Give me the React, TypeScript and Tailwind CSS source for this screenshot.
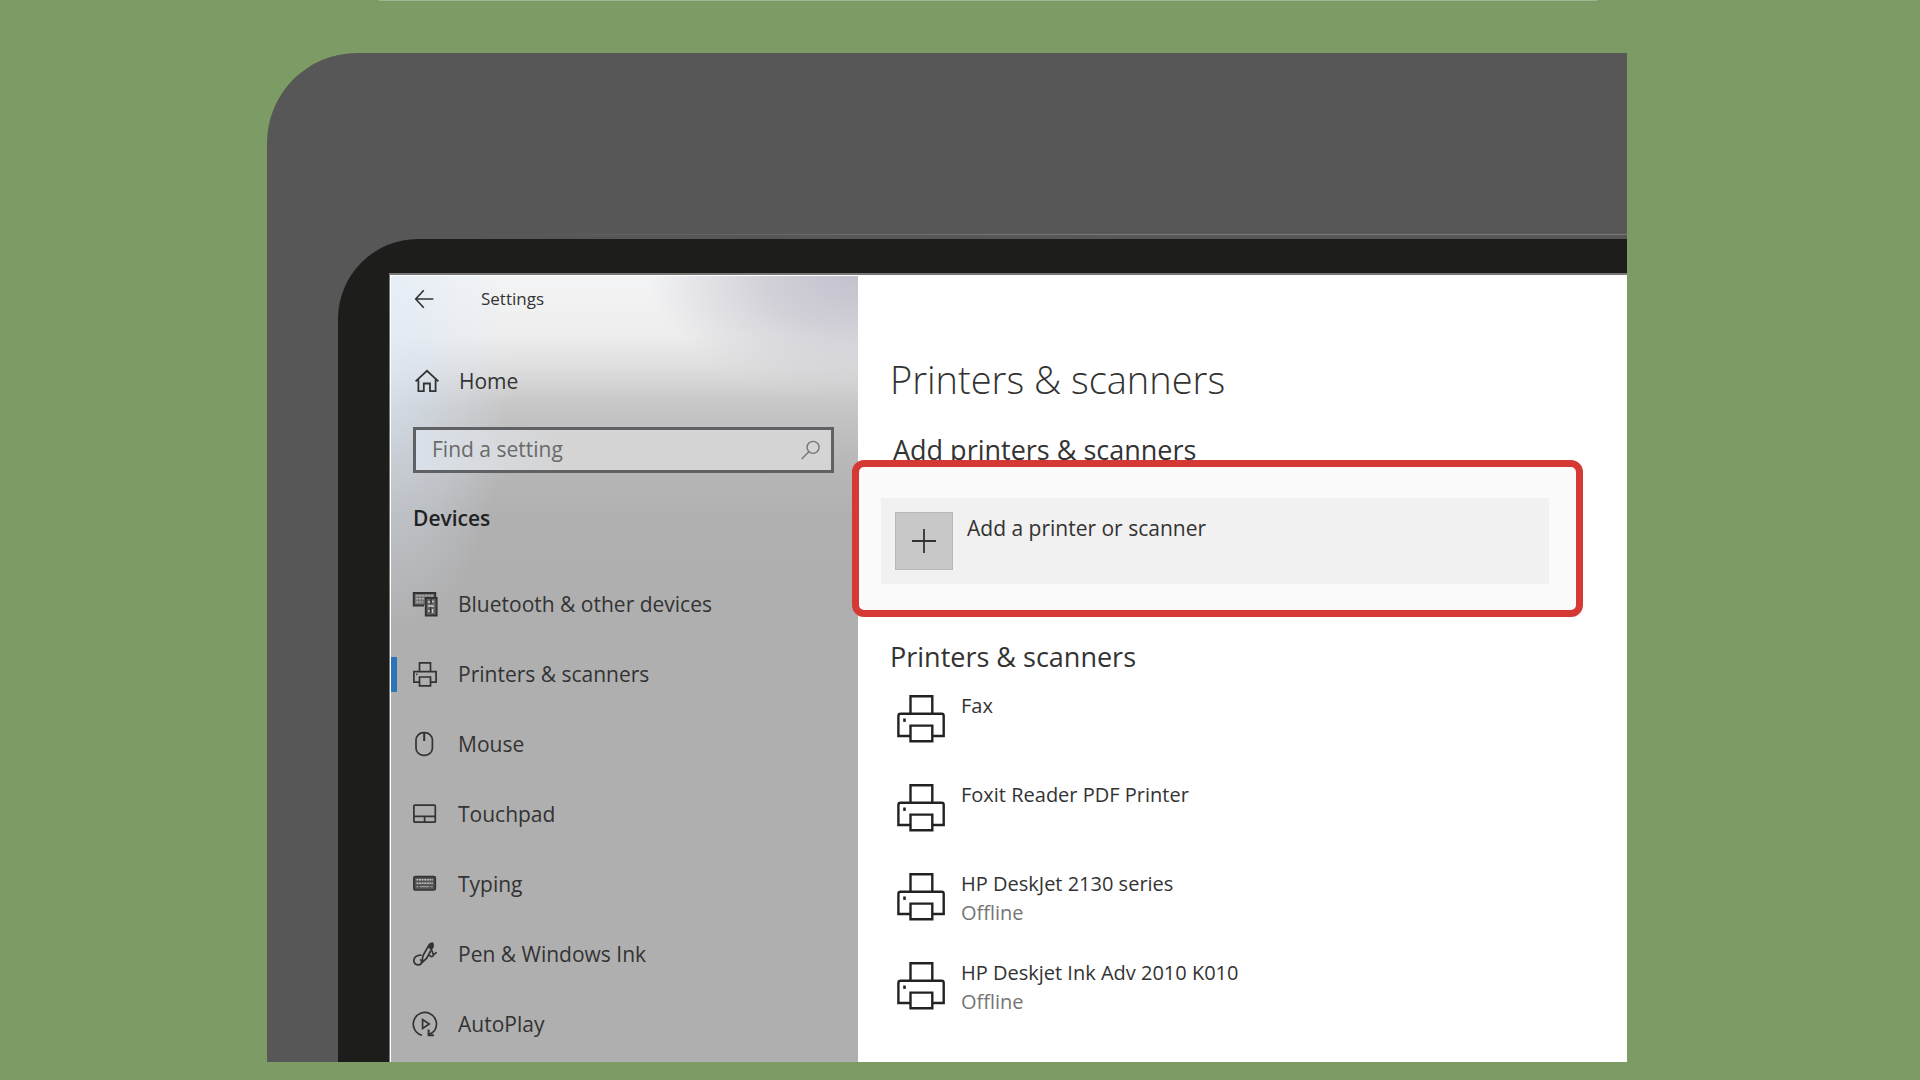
import type { ReactNode } from "react";

interface NavItem {
    label: string;
    icon: ReactNode;
    active?: boolean;
}

interface Printer {
    name: string;
    status?: string;
}

function Icon({ children, className = "w-6 h-6" }: { children: ReactNode; className?: string }) {
    return (
        <svg
            viewBox="0 0 24 24"
            className={`shrink-0 overflow-visible ${className}`}
            fill="none"
            stroke="currentColor"
            strokeWidth={1.7}
            aria-hidden="true"
        >
            {children}
        </svg>
    );
}

const navItems: NavItem[] = [
    {
        label: "Bluetooth & other devices",
        icon: (
            <Icon>
                <path d="M11 13.4H.8V.9h21.4V5" fill="#777" strokeWidth={2} />
                <path d="M3 3.8h17M3 6.8h8M3 10h7" stroke="#aaa" strokeWidth={1.4} strokeDasharray="2.2 .8" />
                <path d="M12.8 6h10.8v17.4H12.8z" fill="#666" strokeWidth={2} />
                <path d="M15 10h2M19 9.5h2M15 14h6M15 19h2M19.5 17v4" stroke="#ccc" strokeWidth={1.6} />
                <path d="M18 7v5M17.6 15v6" strokeWidth={1.4} />
            </Icon>
        ),
    },
    {
        label: "Printers & scanners",
        active: true,
        icon: (
            <Icon>
                <path d="M6.5 9.5V.9h11v8.6" />
                <path d="M6 20.2H.9V9.6h22.2v10.6H18" />
                <path d="M6.5 15h11v8.8h-11z" />
                <path d="M3 12.3h1.6" strokeWidth={1.2} />
            </Icon>
        ),
    },
    {
        label: "Mouse",
        icon: (
            <Icon>
                <rect x="3" y=".6" width="16.4" height="22.8" rx="7.5" />
                <path d="M11.2 1v8" strokeWidth={2} />
            </Icon>
        ),
    },
    {
        label: "Touchpad",
        icon: (
            <Icon>
                <rect x=".9" y="3.2" width="21.4" height="17" rx="1" />
                <path d="M1 14.4h21.2M11.6 14.4V20" />
            </Icon>
        ),
    },
    {
        label: "Typing",
        icon: (
            <Icon>
                <rect x=".9" y="4.6" width="21.4" height="13.4" rx="1.5" fill="#555" />
                <path d="M3.4 7.8h16.4M3.4 11.2h16.4" stroke="#bbb" strokeWidth={1.5} strokeDasharray="2 .6" />
                <path d="M3.4 14.6h2M7 14.6h9M17.6 14.6h2" stroke="#999" strokeWidth={1.3} />
            </Icon>
        ),
    },
    {
        label: "Pen & Windows Ink",
        icon: (
            <Icon>
                <path d="M9 20.5 10 13.5 16.2 2.8c1.4-2 4.6-.2 3.6 2L13.6 16.4z" />
                <path d="M14.6 5.5 18.4 7.8 20.8 3 20.4.2 17.4.8z" fill="currentColor" stroke="none" />
                <path d="M8.5 13.2C3.4 13 .8 15.6.8 18.6c0 3 2.6 4.8 5.4 4.2 2.6-.6 3.4-3.6 1-5.4" />
                <path d="M18.4 8.6c2.2.8.4 3.4 2 3.8 1.4.2 2.2-.8 3-2.2M16.4 12.8c.8 2.2 2.8 2.4 4.4.4" />
            </Icon>
        ),
    },
    {
        label: "AutoPlay",
        icon: (
            <Icon>
                <path d="M9 23.3A11.6 11.6 0 1 1 21.6 18.4c-1.4 1.8-3.4 3.2-5.4 4" />
                <path d="M15.6 17.6v5.6h5.2" strokeWidth={2} />
                <path d="M9.6 7.6v8.8l6.6-4.4z" />
            </Icon>
        ),
    },
];

const printers: Printer[] = [
    { name: "Fax" },
    { name: "Foxit Reader PDF Printer" },
    { name: "HP DeskJet 2130 series", status: "Offline" },
    { name: "HP Deskjet Ink Adv 2010 K010", status: "Offline" },
];

function PrinterIcon() {
    return (
        <svg
            viewBox="0 0 48 48"
            className="h-12 w-12 shrink-0"
            fill="none"
            stroke="#222"
            strokeWidth={2.4}
            aria-hidden="true"
        >
            <path d="M13.5 18.5V1.3h21.8v17.2" />
            <path d="M13.5 41H1.4V21c0-1.4.8-2.2 2.2-2.2h41.2c1.2 0 1.9.8 1.9 2.2v20H35.3" />
            <path d="M13.5 30.6h21.8v15.6H13.5z" />
            <path d="M7.5 23.5v3.4" strokeWidth={2.6} />
        </svg>
    );
}

function Sidebar() {
    return (
        <aside className="flex w-[468px] shrink-0 flex-col border-l border-t border-white bg-[radial-gradient(ellipse_210px_120px_at_100%_0%,#c2c1cd_0%,#c6c5cfbb_45%,transparent_100%),radial-gradient(ellipse_120px_260px_at_0%_12%,#dce8f8aa_0%,transparent_100%),linear-gradient(to_bottom,#f3f4f5_0px,#eeeeee_60px,#dcdcdc_95px,#c6c6c6_130px,#b9b9b9_180px,#b0b0b1_240px,#afafaf_320px)] text-[#333]">
            <header className="flex h-[46px] items-center pl-6">
                <button type="button" aria-label="Back" className="mr-[46px]">
                    <Icon className="h-5 w-5">
                        <path d="M10.5 1.5.9 12l9.6 10.5M1 12h21" strokeWidth={2} />
                    </Icon>
                </button>
                <span className="text-[17px]">Settings</span>
            </header>

            <a href="#home" className="mt-[39px] flex h-10 items-center gap-5 pl-6 text-[21px] leading-7">
                <Icon>
                    <path d="M.6 12.4 12 1.8l11.4 10.6M3.4 10.5v11.6h5.4v-7.6h6.2v7.6h5.6V10.5" strokeWidth={1.8} />
                </Icon>
                Home
            </a>

            <label className="mt-[26px] mr-6 ml-[22px] flex h-[46px] items-center border-3 border-[#5f6164] bg-[linear-gradient(to_right,#dae0e8,#d4d4d4_35%)] pr-2.5 pl-4">
                <input
                    type="text"
                    aria-label="Find a setting"
                    placeholder="Find a setting"
                    className="min-w-0 flex-1 bg-transparent text-[21px] outline-none placeholder:text-[#6a6a6a]"
                />
                <Icon className="h-5 w-5 text-[#777]">
                    <circle cx="14.5" cy="8.8" r="7.2" />
                    <path d="M9.4 14 .8 22.8" />
                </Icon>
            </label>

            <h2 className="mt-[31px] pl-[22px] text-[21px] leading-7 font-semibold text-[#222]">Devices</h2>

            <nav className="mt-[37px]">
                {navItems.map((item) => (
                    <a
                        key={item.label}
                        href={`#${item.label}`}
                        className="flex h-[70px] items-center text-[21px] leading-7"
                    >
                        <span className={item.active ? "h-[35px] w-1.5 bg-[#2b74b8]" : "w-1.5"} />
                        <span className="flex items-center gap-[21px] pl-4">
                            {item.icon}
                            {item.label}
                        </span>
                    </a>
                ))}
            </nav>
        </aside>
    );
}

function Content() {
    return (
        <main className="flex min-w-0 flex-1 flex-col bg-white text-[#333]">
            <h1 className="mt-[78px] pl-8 text-[38px] leading-[52px] font-light">Printers &amp; scanners</h1>
            <h2 className="mt-[27px] pl-[35px] text-[27px] leading-9">Add printers &amp; scanners</h2>

            {/* Highlighted area, drawn over the heading's descenders */}
            <section className="relative z-10 -mt-2 mr-11 -ml-1.5 rounded-xl border-7 border-[#d43934] bg-[#fafafa] pt-[31px] pr-[27px] pb-[26px] pl-[22px]">
                <button type="button" className="flex h-[86px] w-full items-start bg-[#f1f1f1] pt-3.5 pl-3.5 text-left">
                    <span className="flex h-[58px] w-[58px] items-center justify-center border border-[#b8b8b8] bg-[#c8c8c8]">
                        <Icon>
                            <path d="M12 0v24M0 12h24" strokeWidth={1.8} />
                        </Icon>
                    </span>
                    <span className="pl-3.5 text-[21px] leading-8">Add a printer or scanner</span>
                </button>
            </section>

            <h2 className="mt-[22px] pl-8 text-[27px] leading-9">Printers &amp; scanners</h2>
            <ul className="mt-[18px] pl-[39px]">
                {printers.map((printer) => (
                    <li key={printer.name} className="flex h-[89px] gap-4 pt-0.5">
                        <PrinterIcon />
                        <div className="-mt-1 text-[20px] leading-[29px]">
                            <p>{printer.name}</p>
                            {printer.status && <p className="text-[#757575]">{printer.status}</p>}
                        </div>
                    </li>
                ))}
            </ul>
        </main>
    );
}

export default function App() {
    return (
        <div className="flex min-h-screen flex-col bg-[#7d9c65] pr-[293px] pb-[18px] pl-[267px] font-['Open_Sans','Noto_Sans',sans-serif]">
            <div className="mr-[30px] ml-28 h-px bg-[#a0b690]" />
            <div className="mt-[52px] flex flex-1 flex-col overflow-hidden rounded-tl-[90px] bg-[#575757] pt-[181px] pl-[71px]">
                <div className="h-px bg-[linear-gradient(to_right,transparent_10%,#7a7a7a_60%)]" />
                <div className="mt-1 flex flex-1 flex-col rounded-tl-[80px] bg-[#1d1d1c] pt-[34px] pl-[51px]">
                    <div className="flex flex-1 border-t-2 border-l border-[#777]">
                        <Sidebar />
                        <Content />
                    </div>
                </div>
            </div>
        </div>
    );
}
